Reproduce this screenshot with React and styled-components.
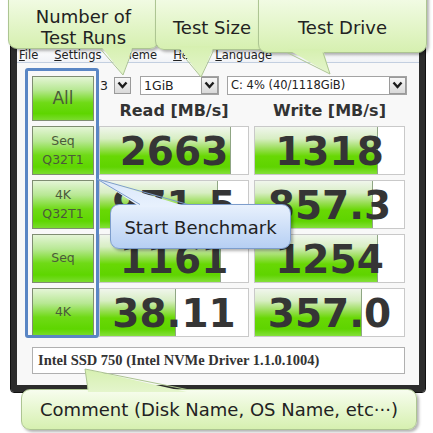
import styled, { createGlobalStyle } from "styled-components";

const Global = createGlobalStyle`
  body {
    margin: 0;
    background: #fff;
    font-family: "DejaVu Sans", Verdana, sans-serif;
  }
`;

const Stage = styled.div`
  position: relative;
  width: 433px;
  height: 433px;
  overflow: hidden;
  box-sizing: border-box;
  padding: 40px 0 0 11px;
  background: #fff;
`;

// main window
const Window = styled.div`
  width: 414px;
  height: 352px;
  box-sizing: border-box;
  border: 6px solid #2c2c2c;
  border-bottom-width: 7px;
  border-radius: 3px;
  outline: 1px solid #111;
  background: #f8f8f8;
  display: flex;
  flex-direction: column;
`;

const MenuBar = styled.div`
  height: 17px;
  display: flex;
  align-items: center;
  gap: 16px;
  padding: 2px 0 0 2px;
  box-sizing: border-box;
  background: linear-gradient(#ffffff, #f1f3f7);
  border-bottom: 1px solid #c3cfe0;
  font-size: 11.5px;
  color: #222;
`;

const Body = styled.div`
  padding: 13px 14px 0 15px;
  display: flex;
  flex-direction: column;
`;

const Board = styled.div`
  display: grid;
  grid-template-columns: 62px 150px 151px;
  grid-template-rows: 18px 22px repeat(4, 49px);
  gap: 5px;
`;

const TestButton = styled.div`
  grid-row: ${(p) => (p.$all ? "1 / span 2" : "auto")};
  box-sizing: border-box;
  border: 1px solid #7f8d72;
  background: linear-gradient(180deg, #e4f5d6 0%, #b8e894 30%, #6fda16 60%, #5ed600 85%, #7adc2e 100%);
  display: flex;
  flex-direction: column;
  align-items: center;
  justify-content: center;
  color: #4b5a3a;
  line-height: 1.45;
`;

const ButtonText = styled.span`
  font-size: ${(p) => (p.$big ? 17 : 12.5)}px;
`;

const Controls = styled.div`
  grid-column: 2 / span 2;
  display: flex;
  align-items: center;
  gap: 8px;
  color: #222;
`;

const Select = styled.div`
  width: ${(p) => p.$w}px;
  height: 19px;
  flex-shrink: 0;
  box-sizing: border-box;
  display: flex;
  align-items: center;
  justify-content: space-between;
  border: 1px solid ${(p) => (p.$bare ? "transparent" : "#a3a3a3")};
  background: ${(p) => (p.$bare ? "transparent" : "#fff")};
  padding-left: ${(p) => (p.$bare ? 0 : 3)}px;
  font-size: ${(p) => p.$fs || 12.5}px;
`;

const Arrow = styled.div`
  width: 17px;
  height: 17px;
  flex-shrink: 0;
  box-sizing: border-box;
  border: 1px solid #9a9a9a;
  background: linear-gradient(#f7f7f7, #d9d9d9);
  display: flex;
  align-items: center;
  justify-content: center;
`;

const Header = styled.div`
  display: flex;
  align-items: center;
  justify-content: center;
  font-weight: bold;
  font-size: 16px;
  color: #333;
`;

const Cell = styled.div`
  display: grid;
  box-sizing: border-box;
  border: 1px solid #c9c9c9;
  background: #fff;
  overflow: hidden;
  & > * {
    grid-area: 1 / 1;
  }
`;

const Fill = styled.div`
  justify-self: start;
  height: 100%;
  box-sizing: border-box;
  border-right: 1px solid #8fa684;
  background: linear-gradient(180deg, #f0f6ec 0%, #d8eec4 25%, #9ade58 46%, #68d804 62%, #5fd400 85%, #84e03a 100%);
`;

const Value = styled.div`
  align-self: center;
  justify-self: center;
  font-weight: bold;
  font-size: 39px;
  line-height: 1;
  color: #353535;
  padding-top: 1px;
`;

const Comment = styled.div`
  margin-top: 10px;
  width: 373px;
  height: 27px;
  box-sizing: border-box;
  border: 1px solid #b0b0b0;
  background: #fff;
  display: flex;
  align-items: center;
  padding-left: 5px;
  font-family: "Liberation Serif", "Times New Roman", serif;
  font-weight: bold;
  font-size: 14.5px;
  color: #333;
`;

// annotations laid over the window
const Frame = styled.div`
  position: absolute;
  left: 25px;
  top: 68px;
  width: 74px;
  height: 270px;
  box-sizing: border-box;
  border: 3px solid #5a86c4;
  border-radius: 3px;
`;

const Bubble = styled.div`
  position: absolute;
  left: ${(p) => p.$x}px;
  top: ${(p) => p.$y}px;
  width: ${(p) => p.$w}px;
  height: ${(p) => p.$h}px;
  box-sizing: border-box;
  border-radius: 9px;
  border: 1px solid ${(p) => (p.$blue ? "#7d9dcc" : "#adc592")};
  background: ${(p) =>
    p.$blue
      ? "linear-gradient(180deg, #e8f1fd 0%, #b6cff3 100%)"
      : "linear-gradient(180deg, #f7fdee 0%, #d6f0b0 100%)"};
  box-shadow: 2px 2px 3px rgba(0, 0, 0, 0.3);
  display: flex;
  flex-direction: column;
  align-items: center;
  justify-content: flex-end;
  padding-bottom: ${(p) => p.$pb || 0}px;
  font-size: 18px;
  line-height: 21px;
  color: #222;
  text-align: center;
  white-space: nowrap;
`;

const Tails = styled.svg`
  position: absolute;
  left: 0;
  top: 0;
  pointer-events: none;
`;

const rows = [
  { label: ["Seq", "Q32T1"], read: "2663", r: 131, write: "1318", w: 123 },
  { label: ["4K", "Q32T1"], read: "971.5", r: 118, write: "857.3", w: 118 },
  { label: ["Seq"], read: "1161", r: 121, write: "1254", w: 123 },
  { label: ["4K"], read: "38.11", r: 76, write: "357.0", w: 107 },
];

function Chevron() {
  return (
    <svg width="11" height="8" viewBox="0 0 11 8">
      <polyline points="1.5,1.5 5.5,6 9.5,1.5" fill="none" stroke="#1c1c1c" strokeWidth="2.4" />
    </svg>
  );
}

function Tail({ pts, base, blue }) {
  const fill = blue ? "url(#blueTail)" : "url(#greenTail)";
  const stroke = blue ? "#7d9dcc" : "#adc592";
  return (
    <g>
      <polygon points={pts} fill={fill} />
      <polyline points={base} fill="none" stroke={stroke} strokeWidth="1" />
    </g>
  );
}

export default function App() {
  return (
    <Stage>
      <Global />
      <Window>
        <MenuBar>
          <span><u>F</u>ile</span>
          <span><u>S</u>ettings</span>
          <span><u>T</u>heme</span>
          <span><u>H</u>elp</span>
          <span><u>L</u>anguage</span>
        </MenuBar>
        <Body>
          <Board>
            <TestButton $all>
              <ButtonText $big>All</ButtonText>
            </TestButton>
            <Controls>
              <Select $w={33} $bare>
                3
                <Arrow>
                  <Chevron />
                </Arrow>
              </Select>
              <Select $w={79}>
                1GiB
                <Arrow>
                  <Chevron />
                </Arrow>
              </Select>
              <Select $w={180} $fs={11.5}>
                C: 4% (40/1118GiB)
                <Arrow>
                  <Chevron />
                </Arrow>
              </Select>
            </Controls>
            <Header>Read [MB/s]</Header>
            <Header>Write [MB/s]</Header>
            {rows.map((row, i) => [
              <TestButton key={"b" + i}>
                {row.label.map((l) => (
                  <ButtonText key={l}>{l}</ButtonText>
                ))}
              </TestButton>,
              <Cell key={"r" + i}>
                <Fill style={{ width: `${row.r}px` }} />
                <Value>{row.read}</Value>
              </Cell>,
              <Cell key={"w" + i}>
                <Fill style={{ width: `${row.w}px` }} />
                <Value>{row.write}</Value>
              </Cell>,
            ])}
          </Board>
          <Comment>Intel SSD 750 (Intel NVMe Driver 1.1.0.1004)</Comment>
        </Body>
      </Window>

      <Frame />

      <Bubble $x={8} $y={-12} $w={151} $h={61} $pb={0}>
        <span>Number of</span>
        <span>Test Runs</span>
      </Bubble>
      <Bubble $x={155} $y={-12} $w={114} $h={62} $pb={11}>
        <span>Test Size</span>
      </Bubble>
      <Bubble $x={258} $y={-12} $w={169} $h={65} $pb={14}>
        <span>Test Drive</span>
      </Bubble>
      <Bubble $blue $x={110} $y={204} $w={181} $h={45} $pb={10}>
        <span>Start Benchmark</span>
      </Bubble>
      <Bubble $x={21} $y={389} $w={396} $h={41} $pb={9}>
        <span>Comment (Disk Name, OS Name, etc···)</span>
      </Bubble>

      <Tails width="433" height="433" viewBox="0 0 433 433">
        <defs>
          <linearGradient id="greenTail" x1="0" y1="0" x2="0" y2="1">
            <stop offset="0" stopColor="#d6f0b0" />
            <stop offset="1" stopColor="#e4f5cc" />
          </linearGradient>
          <linearGradient id="blueTail" x1="0" y1="0" x2="0" y2="1">
            <stop offset="0" stopColor="#d9e7fb" />
            <stop offset="1" stopColor="#e8f1fd" />
          </linearGradient>
        </defs>
        <Tail pts="100,45 133,45 123,75" base="100,48.5 123,75 133,48.5" />
        <Tail pts="178,46 214,46 201,77" base="178,49.5 201,77 214,49.5" />
        <Tail pts="287,49 323,49 330,74" base="287,52.5 330,74 323,52.5" />
        <Tail blue pts="97,179 188,207 140,207" base="140,204.5 97,179 188,204.5" />
        <Tail pts="85,369 187,392 88,392" base="88,389.5 85,369 187,389.5" />
      </Tails>
    </Stage>
  );
}
